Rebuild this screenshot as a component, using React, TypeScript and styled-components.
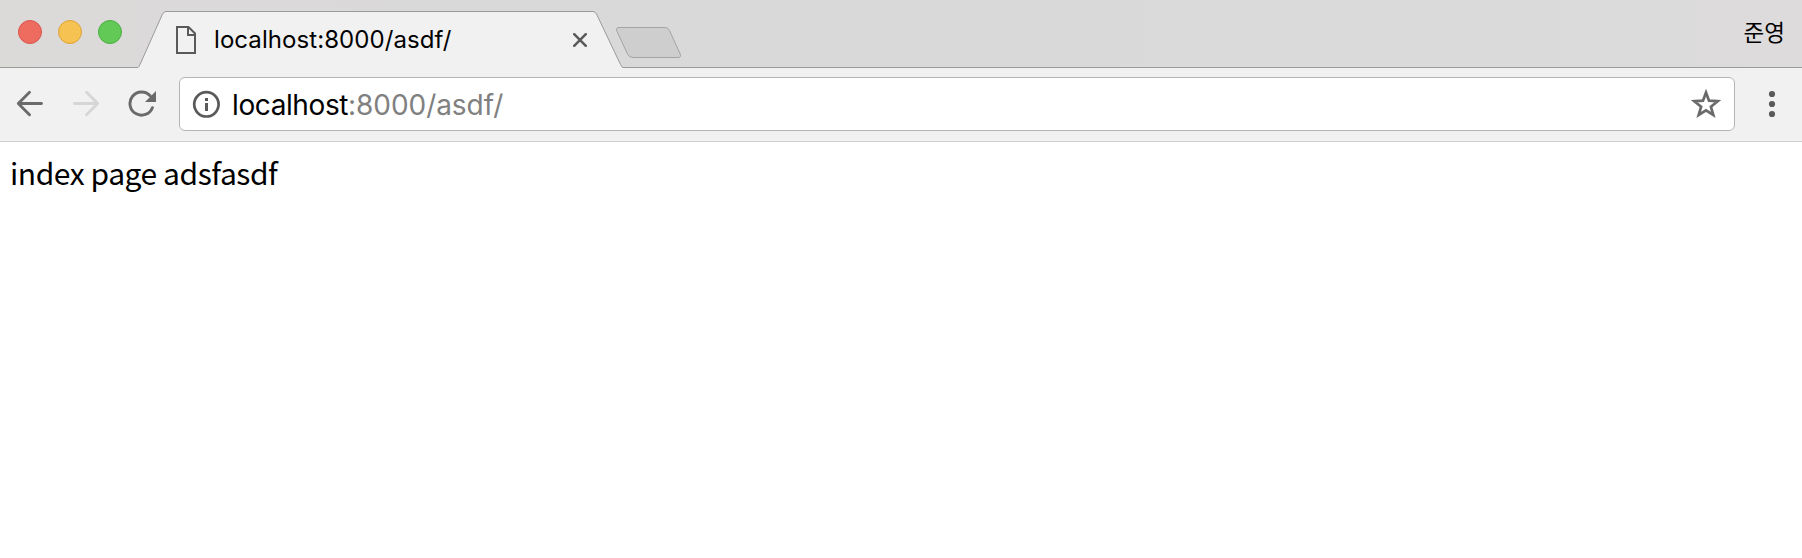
import React from "react";
import styled, { createGlobalStyle } from "styled-components";

const Global = createGlobalStyle`
  * { box-sizing: border-box; }
  body { margin: 0; background: #fff; }
`;

const Window = styled.div`
  display: flex;
  flex-direction: column;
  height: 558px;
  overflow: hidden;
  background: #fff;
  color: #000;
  font-family: Inter, "Noto Sans CJK KR", sans-serif;
`;

const TitleBar = styled.header`
  flex: none;
  display: flex;
  height: 68px;
  background: linear-gradient(90deg, #dcd9d9, #d9d9d9 40%, #dadada 80%, #dddbdb);
  box-shadow: inset 0 -1px #999b99;
`;

const TrafficLights = styled.div`
  display: flex;
  gap: 16px;
  width: 138px;
  padding: 20px 0 0 18px;
`;

const Light = styled.span<{ $fill: string; $edge: string }>`
  width: 24px;
  height: 24px;
  border-radius: 50%;
  background: ${(p) => p.$fill};
  border: 1px solid ${(p) => p.$edge};
`;

const Tab = styled.div`
  position: relative;
  display: flex;
  width: 485px;
  height: 68px;
`;

const TabShape = styled.svg`
  position: absolute;
  inset: 0;
`;

const TabContent = styled.div`
  position: relative;
  display: flex;
  flex: 1;
  align-items: center;
  padding: 12px 36px 0 38px;
`;

const TabTitle = styled.span`
  flex: 1;
  margin-left: 18px;
  font-size: 24px;
  line-height: 30px;
  letter-spacing: 0.07px;
  white-space: nowrap;
`;

const NewTab = styled.svg`
  margin: 26px 0 0 -8px;
`;

const Profile = styled.span`
  margin: 15px 17px 0 auto;
  font-family: "Noto Sans CJK KR", sans-serif;
  font-size: 22.5px;
  line-height: 32px;
`;

const Toolbar = styled.nav`
  flex: none;
  display: flex;
  align-items: center;
  height: 74px;
  padding: 0 0 1px 16px;
  background: #f1f1f1;
  border-bottom: 1px solid #d0d0d0;
`;

const NavIcon = styled.svg`
  flex: none;
  width: 28px;
  height: 28px;
  margin-right: 28px;
`;

const AddressBar = styled.div`
  display: flex;
  align-items: center;
  width: 1556px;
  height: 54px;
  margin-left: -5px;
  padding: 0 13px 0 12px;
  background: #fff;
  border: 1px solid #b5b5b5;
  border-radius: 6px;
`;

const Url = styled.span`
  flex: 1;
  margin-left: 12px;
  padding-top: 1px;
  font-size: 28px;
  line-height: 36px;
  letter-spacing: -0.4px;
  white-space: nowrap;
`;

const UrlRest = styled.span`
  color: #808080;
  letter-spacing: -0.05px;
`;

const Menu = styled.svg`
  margin-left: 33px;
`;

const Page = styled.main`
  padding: 8px 10px;
  font-family: "Noto Sans CJK KR", sans-serif;
  font-size: 30px;
  line-height: 44px;
  letter-spacing: -0.45px;
`;

export default function App() {
  return (
    <Window>
      <Global />
      <TitleBar>
        <TrafficLights>
          <Light $fill="#ee6b60" $edge="#d9564c" />
          <Light $fill="#f6c251" $edge="#dba43b" />
          <Light $fill="#62c956" $edge="#4caf41" />
        </TrafficLights>
        <Tab>
          <TabShape width="485" height="68" viewBox="0 0 485 68">
            <path d="M0 68V67.5Q1 67 2 64.5L24.5 14Q26 11.5 28 11.5H455Q457 11.5 458.5 14L482.5 64.5Q484 67.5 485 67.5V68Z" fill="#f1f1f1" />
            <path d="M0 67.5Q1 67 2 64.5L24.5 14Q26 11.5 28 11.5H455Q457 11.5 458.5 14L482.5 64.5Q484 67.5 485 67.5" fill="none" stroke="#999b99" />
          </TabShape>
          <TabContent>
            <svg width="20" height="28" viewBox="0 0 20 28" fill="none" stroke="#5a5a5a" strokeWidth="2">
              <path d="M1 1H12.5L19 7.5V27H1Z M12 1V9H19" />
            </svg>
            <TabTitle>localhost:8000/asdf/</TabTitle>
            <svg width="14" height="14" viewBox="0 0 14 14" stroke="#5a5a5a" strokeWidth="2.5" strokeLinecap="round">
              <path d="M1.2 1.2L12.8 12.8M12.8 1.2L1.2 12.8" />
            </svg>
          </TabContent>
        </Tab>
        <NewTab width="68" height="34" viewBox="0 0 68 34">
          <path d="M4 1.5H50Q53 1.5 54.5 4.5L65.2 28Q66.5 31.5 63 31.5H18Q14 31.5 12.5 28L1.8 5Q.5 1.5 4 1.5Z" fill="#cecece" stroke="#a4a4a4" />
        </NewTab>
        <Profile>준영</Profile>
      </TitleBar>
      <Toolbar>
        <NavIcon viewBox="0 0 28 28" fill="none" stroke="#6a6a6a" strokeWidth="2.9" strokeLinecap="round" strokeLinejoin="round">
          <path d="M13.5 2.3L2.3 13.5L13.5 24.7M2.5 13.5H25.5" />
        </NavIcon>
        <NavIcon viewBox="0 0 28 28" fill="none" stroke="#d6d6d6" strokeWidth="2.9" strokeLinecap="round" strokeLinejoin="round">
          <path d="M14.5 2.3L25.7 13.5L14.5 24.7M2.5 13.5H25.5" />
        </NavIcon>
        <NavIcon viewBox="0 0 28 28" fill="none" stroke="#6a6a6a" strokeWidth="2.9" strokeLinecap="round">
          <path d="M22.2 5.8A11.6 11.6 0 1 0 24.4 17.7" />
          <path d="M28 1V12H17Z" fill="#6a6a6a" stroke="none" />
        </NavIcon>
        <AddressBar>
          <svg width="28" height="28" viewBox="0 0 28 28">
            <circle cx="14.4" cy="14.3" r="12.2" fill="none" stroke="#5a5a5a" strokeWidth="2.7" />
            <path d="M13 8H16V11H13Z M13 13H16V21H13Z" fill="#5a5a5a" />
          </svg>
          <Url>localhost<UrlRest>:8000/asdf/</UrlRest></Url>
          <svg width="30" height="30" viewBox="0 0 30 30">
            <path d="M15 3.5L18 11.7L26.7 12.2L19.9 17.7L22.3 26L15 21.3L7.7 26L10.1 17.7L3.3 12.2L12 11.7Z" fill="none" stroke="#6a6a6a" strokeWidth="2.7" />
          </svg>
        </AddressBar>
        <Menu width="8" height="28" viewBox="0 0 8 28" fill="#5a5a5a">
          <circle cx="4" cy="4" r="3.1" />
          <circle cx="4" cy="14" r="3.1" />
          <circle cx="4" cy="24" r="3.1" />
        </Menu>
      </Toolbar>
      <Page>index page adsfasdf</Page>
    </Window>
  );
}
